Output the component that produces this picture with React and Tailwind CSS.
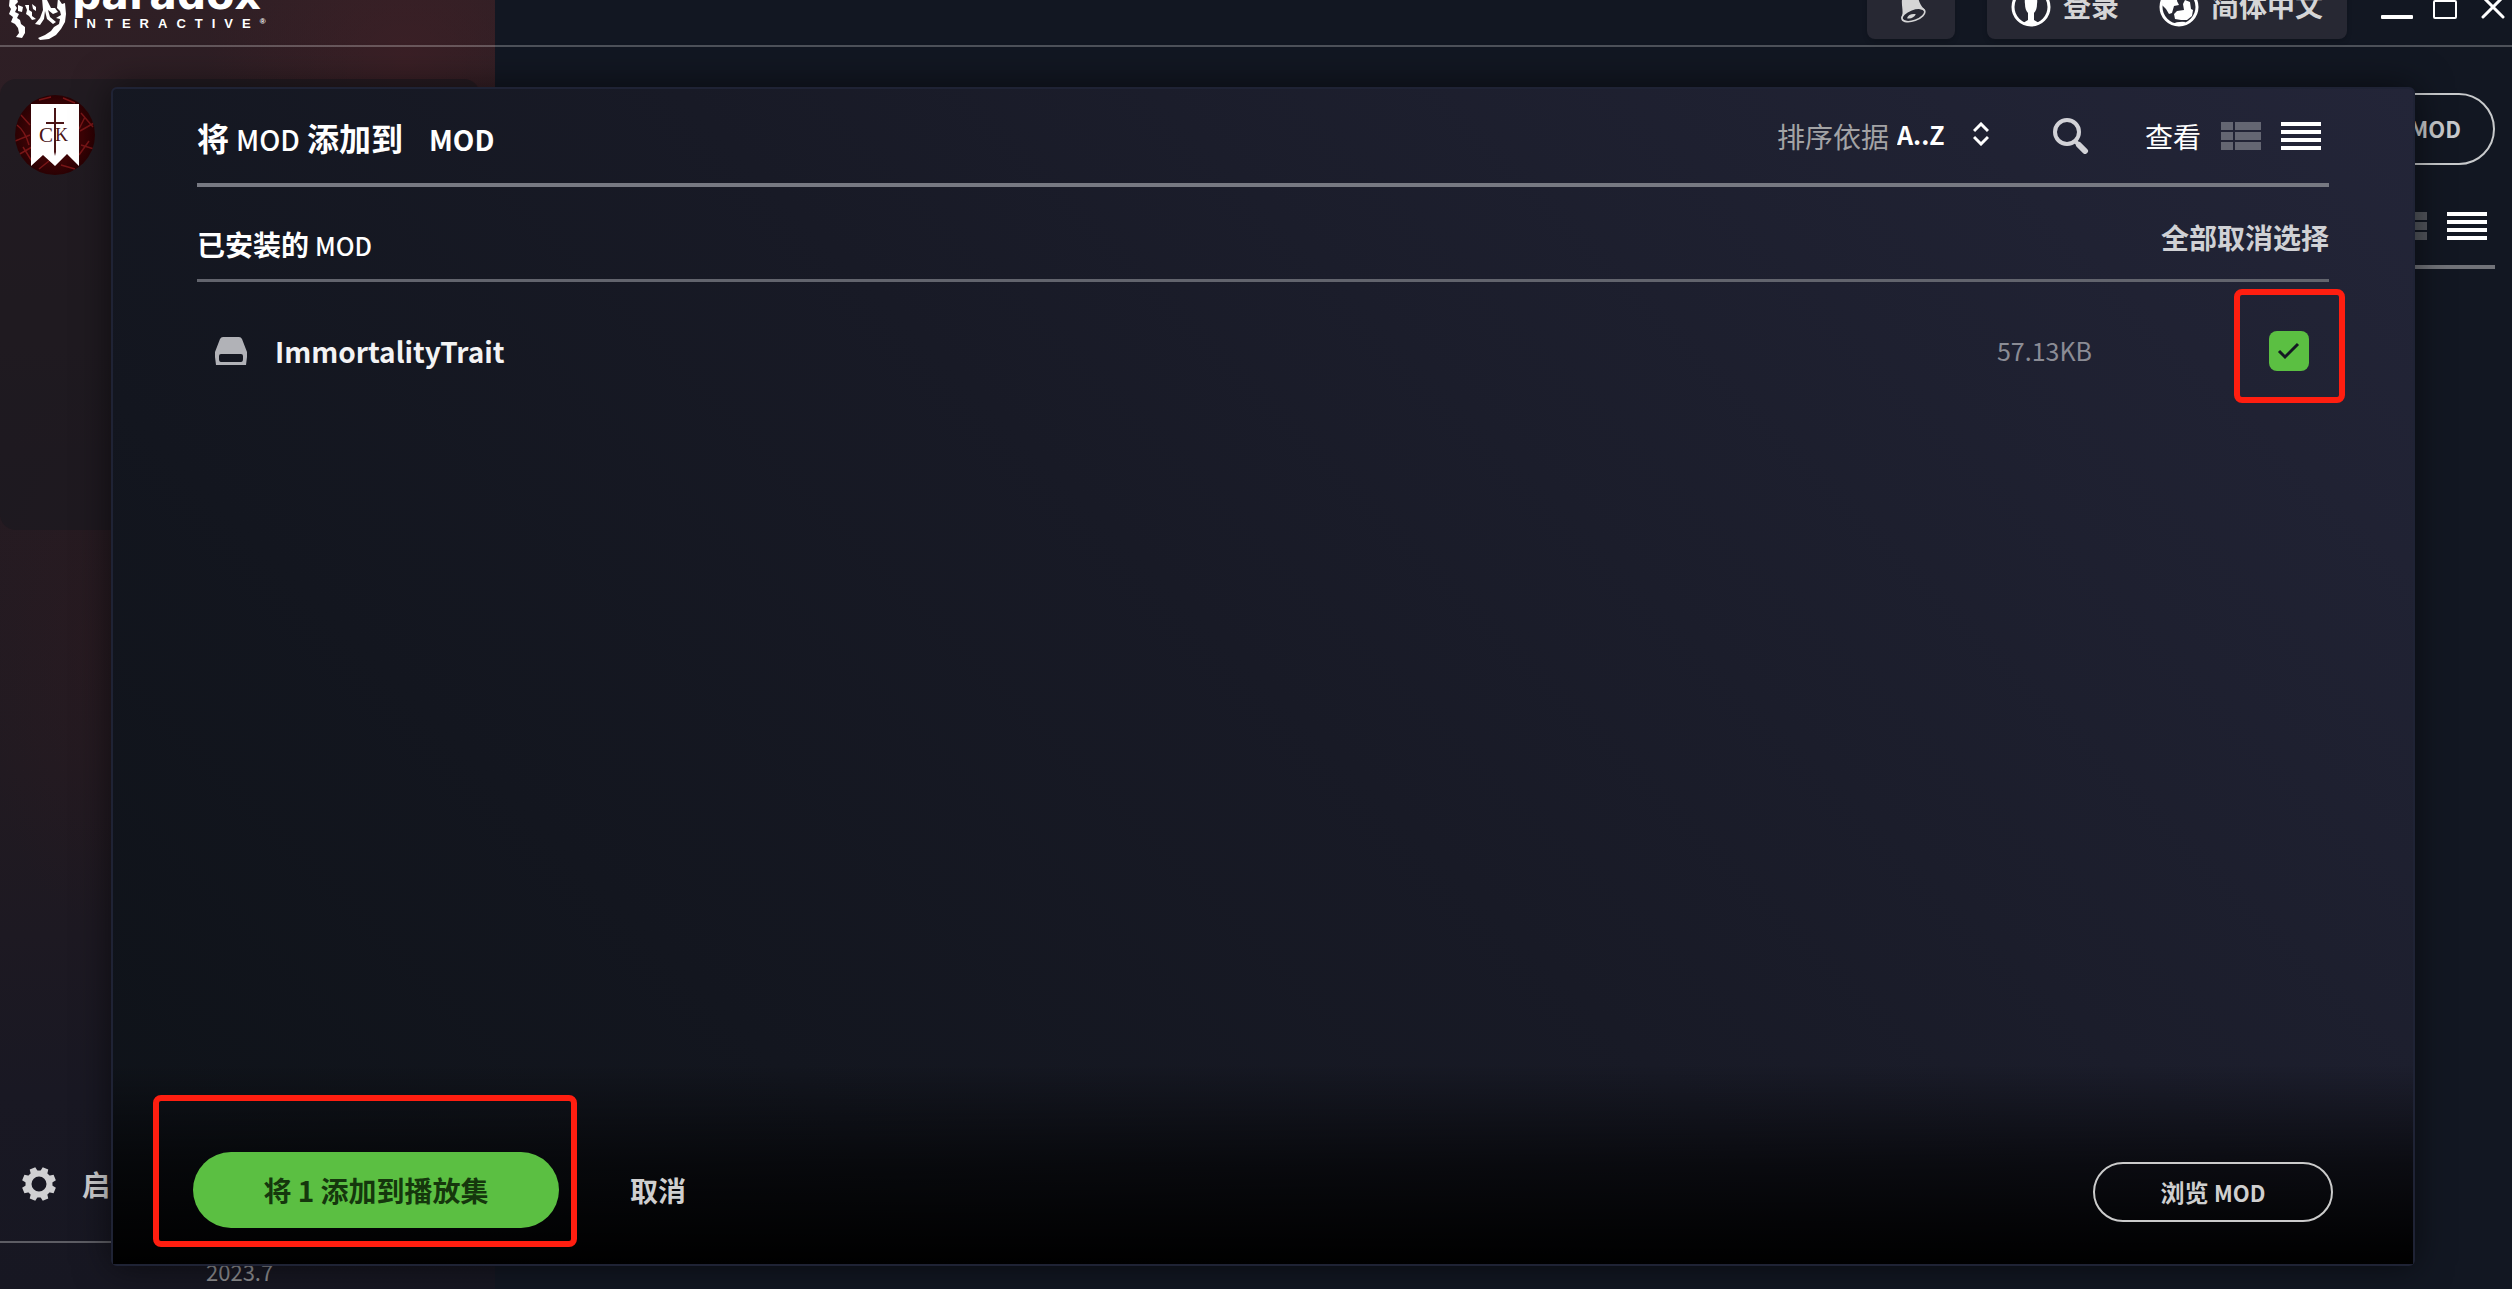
import React from 'react';

const mods = [{ id: 'immortality', name: 'ImmortalityTrait', size: '57.13KB' }];

const ParadoxLogo = () => (
  <a href="#" className="flex items-end gap-1.5 pl-2 text-white" aria-label="Paradox Interactive">
    <svg viewBox="0 0 58 62" className="w-[58px] h-[62px] shrink-0" fill="currentColor">
      <path d="M2 18 1 28 3 31 1 36 5 39 3 44 7 46 10 50 11 55 8 59 14 60 17 55 17 49 13 46 12 42 9 40 11 36 7 34 9 30 7 27 10 24 8 18Z" />
      <path d="M10 27 15 29 14 34 10 33ZM17 27 21 27 21 32 24 34 24 38 28 41 24 42 21 38 18 36 19 32ZM24 26 28 29 28 33 25 31Z" />
      <path d="M34 20 35 32 32 40 27 46 32 47 36 41 37 33 39 41 45 46 48 44 42 39 40 32 45 36 50 34 47 30 43 30 38 20Z" />
      <path d="M50 20 54 26 57 25 58 36 57 44 53 51 48 57 41 61 32 62 30 60 37 57 43 53 46 49 51 46 52 41 48 40 53 37 52 33 49 30Z" />
      <path d="M12 16 20 6 34 2 46 6 54 16 44 12 34 9 24 12 16 20Z" />
    </svg>
    <span className="flex flex-col mb-2">
      <span className="font-['DejaVu_Sans'] font-black text-[41px] leading-[42px]">paradox</span>
      <span className="flex items-start pl-0.5 font-['Liberation_Sans'] font-bold text-[13px] leading-4">
        <span className="tracking-[9px]">INTERACTIVE</span>
        <span className="text-[8px] leading-3">®</span>
      </span>
    </span>
  </a>
);

const BellIcon = () => (
  <svg viewBox="0 0 40 44" className="w-8 h-9" fill="none">
    <path d="M8 35C12 28 6 16 10 9c3-5 9-7 14-4 7 4 4 12 13 20L9 38Z" fill="#d5d5d6" />
    <ellipse cx="23" cy="32" rx="15" ry="7" transform="rotate(-20 23 32)" fill="#272833" stroke="#d5d5d6" strokeWidth="2" />
    <path d="M15 36c1-4 6-6 11-5-2 4-6 6-11 5Z" fill="#d5d5d6" />
  </svg>
);

const UserIcon = () => (
  <svg viewBox="0 0 40 40" className="w-10 h-10" fill="none">
    <circle cx="20" cy="20" r="18" stroke="#fff" strokeWidth="3" />
    <path d="M20 7c-5 0-7 4-6 10 0 4 1 7 3 9v7l-5 3c5 3 11 3 16 0l-5-3v-7c2-2 3-5 3-9 1-6-1-10-6-10Z" fill="#fff" />
  </svg>
);

const GlobeIcon = () => (
  <svg viewBox="0 0 40 40" className="w-10 h-10" fill="none">
    <circle cx="20" cy="20" r="18" stroke="#fff" strokeWidth="3" />
    <path d="M4 12c4-6 9-8 15-7l-1 9 2 4-5 1-2 7-3 1-3-5-4-4Z" fill="#fff" />
    <path d="M26 13l5 2 1 7 2 1-1 6-5 4-6 0-6-1-1-5 3-3 7-1-1-6Z" fill="#fff" />
    <path d="M13 37q6-3 14-2l-6 4Z" fill="#fff" />
  </svg>
);

const SearchIcon = () => (
  <svg viewBox="0 0 36 36" className="w-9 h-9" fill="none" stroke="#d2d2d7">
    <circle cx="14" cy="14" r="12" strokeWidth="4" />
    <path d="M23 24l3 3" strokeWidth="4" />
    <path d="M26 27l6 6" strokeWidth="6" strokeLinecap="round" />
  </svg>
);

const GridIcon = ({ className }) => (
  <svg viewBox="0 0 40 28" className={className} fill="currentColor">
    <path d="M0 0h12v8H0zM14 0h26v8H14zM0 10h12v8H0zM14 10h26v8H14zM0 20h12v8H0zM14 20h26v8H14z" />
  </svg>
);

const ListIcon = () => (
  <svg viewBox="0 0 40 28" className="w-10 h-7 text-white" fill="currentColor">
    <path d="M0 0h40v4H0zM0 8h40v4H0zM0 16h40v4H0zM0 24h40v4H0z" />
  </svg>
);

const DriveIcon = () => (
  <svg viewBox="0 0 32 28" className="w-8 h-7" fill="#b1b2b7">
    <path
      fillRule="evenodd"
      d="M8 0h16q2 0 3 2l5 13v5l-1 8H1l-1-8v-5L5 2q1-2 3-2ZM6 17q-2 0-2 2v3q0 3 2 3h20q2 0 2-3v-3q0-2-2-2Z"
    />
  </svg>
);

const GearIcon = () => (
  <svg viewBox="0 0 34 34" className="w-[34px] h-[34px]" fill="none" stroke="#d0d0d2">
    <circle cx="17" cy="17" r="10.5" strokeWidth="6" />
    {[22.5, 67.5, 112.5, 157.5].map((angle) => (
      <g key={angle} transform={`rotate(${angle} 17 17)`} fill="#d0d0d2" stroke="none">
        <path d="M13 6l1-6h6l1 6Z" />
        <path d="M13 28l1 6h6l1-6Z" />
      </g>
    ))}
  </svg>
);

const GameBadge = () => (
  <svg viewBox="0 0 80 80" className="w-20 h-20" aria-label="Crusader Kings">
    <defs>
      <radialGradient id="velvet">
        <stop offset="0" stopColor="#4a0305" />
        <stop offset="0.7" stopColor="#3b0305" />
        <stop offset="1" stopColor="#2a0103" />
      </radialGradient>
      <clipPath id="round">
        <circle cx="40" cy="40" r="40" />
      </clipPath>
    </defs>
    <g clipPath="url(#round)">
      <rect width="80" height="80" fill="url(#velvet)" />
      <g stroke="#8a1a1b" strokeWidth="1.5" fill="none" opacity="0.8">
        <path d="M2 30q8 6 12 20M0 46l15-6M6 20l9 10M3 60l14-8M8 52l10 16M66 18l12 14M65 36l14-8M66 50l13 4M64 60l10-14M24 5l12-3M48 3l12 5M24 74l10-8M46 70l14 4M70 22l-6 12" />
      </g>
      <path d="M16 9h48v62L52 59 40 71 28 60 16 71Z" fill="#fff" />
      <path d="M39 13h2v14h8v2h-8v28l-1 4-1-4V29h-8v-2h8Z" fill="#4a1416" />
      <g fill="#4a1416" fontFamily="Liberation Serif, serif">
        <text x="24" y="47" fontSize="21">C</text>
        <text x="40" y="46" fontSize="18">K</text>
      </g>
    </g>
  </svg>
);

const Header = () => (
  <header className="relative h-[79px] border-b-2 border-white/25 flex items-center justify-between shrink-0">
    <ParadoxLogo />
    <div className="flex items-center text-[28px] font-bold text-[#d5d5d6]">
      <button className="w-[88px] h-16 mr-8 rounded-lg bg-[#272833] shadow-md flex items-center justify-center" aria-label="通知">
        <BellIcon />
      </button>
      <div className="h-16 px-6 mr-[34px] rounded-lg bg-[#272833] shadow-md flex items-center gap-10">
        <button className="flex items-center gap-3">
          <UserIcon />
          <span className="pb-1">登录</span>
        </button>
        <button className="flex items-center gap-3">
          <GlobeIcon />
          <span className="pb-1">简体中文</span>
        </button>
      </div>
      <div className="flex items-center gap-5 pr-[7px] text-white">
        <button aria-label="最小化">
          <svg viewBox="0 0 32 24" className="w-8 h-6" fill="currentColor">
            <rect y="20" width="32" height="4" rx="1" />
          </svg>
        </button>
        <button aria-label="最大化">
          <svg viewBox="0 0 24 24" className="w-6 h-6" fill="none" stroke="currentColor" strokeWidth="2">
            <rect x="1" y="6" width="22" height="17" rx="1" />
          </svg>
        </button>
        <button aria-label="关闭" className="pl-1">
          <svg viewBox="0 0 24 24" className="w-6 h-6" stroke="currentColor" strokeWidth="3" strokeLinecap="round">
            <path d="M2 2l20 20M22 2L2 22" />
          </svg>
        </button>
      </div>
    </div>
  </header>
);

// Launcher screen that stays visible around the dialog
const Launcher = () => (
  <>
    <div className="relative flex flex-1 justify-between">
      <aside className="w-[480px] h-[451px] mt-8 rounded-2xl bg-[#16181d]/50 pl-[15px] pt-4">
        <GameBadge />
      </aside>
      <div className="w-[400px] mr-[17px] pt-[46px] flex flex-col items-end">
        <button className="w-[240px] h-[72px] pr-8 pb-0.5 rounded-full border-2 border-[#c8cacc] text-right text-[22px] font-bold text-[#c8cacc]">
          添加 MOD
        </button>
        <div className="w-full h-[104px] pr-2 pt-[47px] border-b-4 border-[#717379] flex justify-end gap-5">
          <GridIcon className="w-10 h-7 text-[#53565d]" />
          <ListIcon />
        </div>
      </div>
    </div>
    <div className="relative w-[495px] h-[116px] border-b-2 border-white/30 flex items-center pl-[22px] gap-[26px]">
      <GearIcon />
      <button className="text-[28px] font-bold text-[#cfcfd1]">启动器设置</button>
    </div>
    <div className="relative h-[46px] pl-[206px] pt-3 text-[22px] leading-8 text-[#8d8d90]">2023.7</div>
  </>
);

const Highlight = ({ className }) => (
  <span className={`absolute border-6 border-[#ff1e10] rounded-lg pointer-events-none ${className}`} />
);

const AddModDialog = () => (
  <div
    role="dialog"
    aria-labelledby="dialog-title"
    className="absolute top-[87px] bottom-[23px] left-[111px] right-[97px] flex flex-col border-2 border-[#1f2335] rounded-md bg-[linear-gradient(45deg,#0e1218,#181a26_50%,#232538)] shadow-[0_0_36px_rgba(0,0,0,0.55)]"
  >
    <div className="px-[84px]">
      <div className="h-[98px] border-b-4 border-[#777982] flex items-center justify-between">
        <h1 id="dialog-title" className="pt-0.5 flex items-baseline text-white text-[32px] font-bold">
          将<span className="text-[28px] font-medium mx-[7px]">MOD</span>添加到
          <span className="text-[28px] ml-[26px]">MOD</span>
        </h1>
        <div className="flex items-center text-[28px]">
          <label htmlFor="sort" className="text-[#a3a3a5] mr-2">排序依据</label>
          <select id="sort" className="appearance-none w-[76px] pb-0.5 text-[25px] font-bold text-white">
            <option>A..Z</option>
          </select>
          <svg viewBox="0 0 16 24" className="w-4 h-6 mb-1" fill="none" stroke="#fff" strokeWidth="3">
            <path d="M1 9l7-7 7 7M1 15l7 7 7-7" />
          </svg>
          <button className="ml-16" aria-label="搜索">
            <SearchIcon />
          </button>
          <span className="ml-14 text-white">查看</span>
          <button className="ml-5" aria-label="网格视图">
            <GridIcon className="w-10 h-7 text-[#646672]" />
          </button>
          <button className="ml-5 mr-2" aria-label="列表视图">
            <ListIcon />
          </button>
        </div>
      </div>

      <div className="h-[95px] border-b-3 border-[#62646d] flex items-center justify-between pt-2">
        <h2 className="pt-3.5 text-white text-[28px] font-bold flex items-baseline">
          已安装的<span className="text-[25px] font-medium ml-1.5">MOD</span>
        </h2>
        <button className="text-[28px] font-bold text-[#d0d1d5]">全部取消选择</button>
      </div>

      <ul>
        {mods.map((mod) => (
          <li key={mod.id} className="h-[138px] pl-[18px] pr-5 flex items-center">
            <DriveIcon />
            <label htmlFor={mod.id} className="ml-7 text-[28px] font-bold text-[#f3f3f4]">{mod.name}</label>
            <span className="ml-auto mr-[177px] text-[25px] text-[#8b8c95]">{mod.size}</span>
            <span className="relative flex">
              <input
                id={mod.id}
                type="checkbox"
                defaultChecked
                className="appearance-none w-10 h-10 rounded-lg bg-[#5bbf42]"
              />
              <svg viewBox="0 0 40 40" className="absolute inset-0 pointer-events-none" fill="none" stroke="#151823" strokeWidth="3">
                <path d="M10 20l6 6 13-13" />
              </svg>
              <Highlight className="-left-[35px] -right-9 -top-[42px] -bottom-8" />
            </span>
          </li>
        ))}
      </ul>
    </div>

    <div className="mt-auto h-[200px] px-20 pt-[52px] flex items-center bg-linear-to-b from-transparent via-black/60 to-black">
      <div className="relative">
        <button className="w-[366px] h-[76px] rounded-full bg-[#5bbf42] text-[28px] font-bold text-[#15370d]">
          将 1 添加到播放集
        </button>
        <Highlight className="-left-10 -right-[18px] -top-[57px] -bottom-[19px]" />
      </div>
      <button className="ml-[71px] text-[28px] font-bold text-[#cfcfcf]">取消</button>
      <button className="ml-auto mt-1 w-[240px] h-[60px] rounded-full border-2 border-[#cbcbcb] text-[24px] font-bold text-[#cfcfcf]">
        浏览 <span className="text-[22px]">MOD</span>
      </button>
    </div>
  </div>
);

const App = () => {
  return (
    <div className="relative h-screen overflow-hidden bg-[#121722] font-['Noto_Sans_CJK_SC',sans-serif]">
      {/* Blurred key art */}
      <div className="absolute left-0 top-0 w-[495px] h-full bg-[radial-gradient(circle_at_405px_60px,#42202699_0px,transparent_200px),radial-gradient(ellipse_110px_280px_at_90px_640px,#2d1a2066_0px,transparent_100%),linear-gradient(#2f1f25_0%,#261b22_35%,#211a21_60%,#191823_85%,#171722_100%)]" />
      <div className="-mt-8 h-[calc(100vh+32px)] flex flex-col">
        <Header />
        <Launcher />
      </div>
      <AddModDialog />
    </div>
  );
};

export default App;
